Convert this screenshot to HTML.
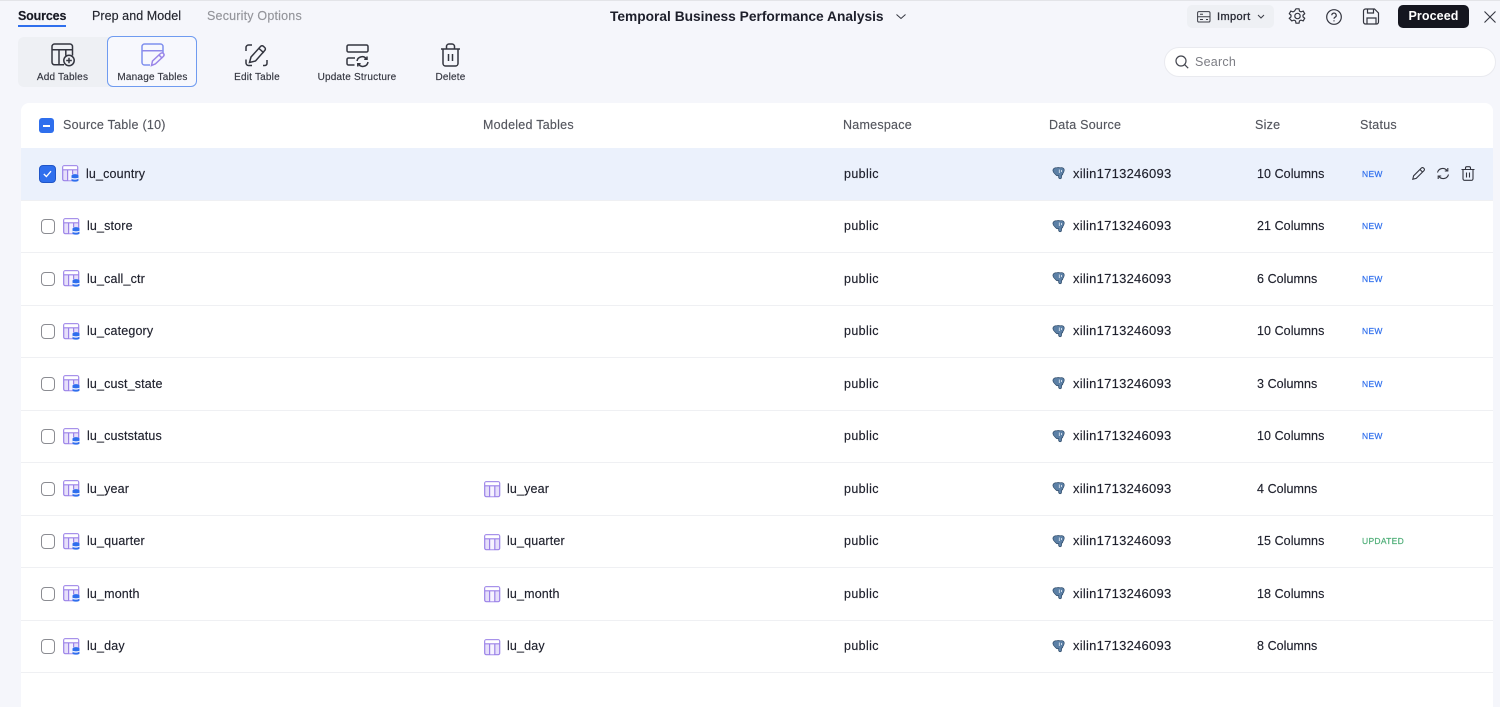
<!DOCTYPE html>
<html lang="en">
<head>
<meta charset="utf-8">
<title>Temporal Business Performance Analysis</title>
<style>
html,body{margin:0;padding:0}
body{width:1500px;height:707px;overflow:hidden;background:#f5f6fb;position:relative;font-family:"Liberation Sans",sans-serif;color:#20222e;-webkit-font-smoothing:antialiased}
.a{position:absolute;white-space:nowrap}
svg{position:absolute;overflow:visible}
.tab{top:8px;font-size:12.5px;line-height:16px;letter-spacing:.06px;-webkit-text-stroke:.15px}
.tool{top:72px;font-size:10px;line-height:12px;color:#33353f;letter-spacing:.2px;text-align:center;-webkit-text-stroke:.15px}
.th{top:117px;font-size:12.5px;line-height:16px;color:#55575f;letter-spacing:.25px;-webkit-text-stroke:.15px}
.row{position:absolute;left:0;width:1473px;height:52.5px;border-bottom:1.5px solid #eff0f3;box-sizing:border-box}
.t{position:absolute;top:17.8px;font-size:12.5px;line-height:16px;letter-spacing:.15px;white-space:nowrap;color:#20222e;-webkit-text-stroke:.15px}
.n1{left:67px}.n2{left:487px}.ns{left:824px;letter-spacing:.38px}.ds{left:1053px;font-size:13px;letter-spacing:.25px}.sz{left:1237px;letter-spacing:.07px}
.st{position:absolute;left:1342px;top:19.500px;font-size:8.5px;line-height:12px;letter-spacing:.3px;color:#2f6fed;-webkit-text-stroke:.2px}
.up{color:#4fae78}
.cb{position:absolute;left:21px;top:18.5px;width:14px;height:14.500px;box-sizing:border-box;border:1.4px solid #8b8c92;border-radius:4px;background:#fff}
.i1{left:43px;top:17px}.i2{left:464px;top:18px}.i3{left:1032px;top:19px}
</style>
</head>
<body>
<div class="a" style="left:0;top:0;width:1500px;height:1px;background:#e3e4e8"></div>

<svg width="0" height="0" style="left:0;top:0">
<defs>
<g id="src">
<rect x=".7" y=".7" width="15" height="15" rx="1.6" fill="#e6dffa" stroke="#9b82e8" stroke-width="1.2"/>
<rect x="1.300" y="1.300" width="13.800" height="3.400" fill="#fff"/>
<rect x="5.900" y="5.300" width="4.400" height="10" fill="#f6f3ff"/>
<path d="M.7 4.800h15M5.600 4.800v10.900M10.600 4.800v4.500" stroke="#9b82e8" stroke-width="1.2" fill="none"/>
<ellipse cx="13" cy="10.800" rx="3.500" ry="1.700" fill="#2f6fed"/>
<path d="M9.500 14.100c1 1 6 1 7 0v1.500c-1 1.400-6 1.400-7 0z" fill="#2f6fed"/>
<rect x="9.500" y="10.800" width="7" height="3.500" fill="#2f6fed"/>
<path d="M9.500 13.100c1 .9 6 .9 7 0" stroke="#fff" stroke-width=".9" fill="none"/>
</g>
<g id="mod">
<rect x=".7" y=".7" width="15" height="15" rx="1.6" fill="#e6dffa" stroke="#9b82e8" stroke-width="1.2"/>
<rect x="1.300" y="1.300" width="13.800" height="3.400" fill="#fff"/>
<rect x="5.800" y="5" width="4.800" height="10.300" fill="#f6f3ff"/>
<path d="M.7 4.800h15M5.600 4.800v10.900M10.800 4.800v10.900" stroke="#9b82e8" stroke-width="1.2" fill="none"/>
</g>
<g id="pg">
<path d="M1 4C.6 1.800 2.500.5 4.500.8c1-.3 2.500-.4 3.500 0 1.500-.5 4-.2 4.200 2 .1 1.700-.8 3-1.500 4 .2.900-.3 1.300-1 1.200l-.2 2.500c-.1 1.500-2.300 1.700-2.800.3l-.2-2.200c-1 .3-2 .3-2.700-.8C3.300 7 1.300 6 1 4z" fill="#5c80a6" stroke="#2e4a68" stroke-width=".7"/>
<path d="M7.300 2.500v3.500M9.500 3v2" stroke="#e8eef6" stroke-width=".8" fill="none"/>
</g>
</defs>
</svg>

<!-- tabs -->
<div class="a tab" style="left:18px;color:#171923;font-weight:bold;font-size:12.5px;letter-spacing:-.15px">Sources</div>
<div class="a" style="left:18px;top:25px;width:48px;height:2px;background:#2f6fed"></div>
<div class="a tab" style="left:92px;color:#24262f">Prep and Model</div>
<div class="a tab" style="left:207px;color:#94959b;letter-spacing:.2px">Security Options</div>

<div class="a" style="left:610px;top:8px;font-size:13.75px;line-height:18px;font-weight:bold;color:#1d1f2b">Temporal Business Performance Analysis</div>
<svg style="left:896px;top:14px" width="10" height="6" fill="none" stroke="#33353f" stroke-width="1"><path d="M.5.5l4.500 4 4.500-4"/></svg>

<!-- toolbar -->
<div class="a" style="left:18px;top:37px;width:100px;height:50px;background:#eef0f4;border-radius:6px"></div>
<div class="a" style="left:107px;top:36px;width:90px;height:51px;box-sizing:border-box;background:#f7f8fd;border:1.2px solid #6f9bf0;border-radius:6px"></div>

<svg style="left:51px;top:43px" width="25" height="25" fill="none" stroke="#33353f" stroke-width="1.500">
<path d="M13 21.800H3.500A2.500 2.500 0 0 1 1 19.300V3.500A2.500 2.500 0 0 1 3.500 1h15.500a2.500 2.500 0 0 1 2.500 2.500v9M1 6.800h20.500M8 6.800v15M14.800 6.800v6"/>
<circle cx="18" cy="17.500" r="5.200"/><path d="M18 14.700v5.600M15.200 17.500h5.600"/>
</svg>
<svg style="left:141px;top:43px" width="25" height="25" fill="none" stroke="#9a85e8" stroke-width="1.500">
<path d="M9 22H3.500A2.500 2.500 0 0 1 1 19.500V3.500A2.500 2.500 0 0 1 3.500 1h16A2.500 2.500 0 0 1 22 3.500v7" stroke="#7f8fee"/>
<path d="M1 7.800h21" stroke="#8f8aea"/>
<path d="M10.500 22.500l1-4.500 8-7.500c1-.9 2.200-.9 3 0 .8.900.7 2-.1 2.900l-8 7.500z"/><path d="M18 12l3.300 3.300"/>
</svg>
<svg style="left:245px;top:44px" width="24" height="23" fill="none" stroke="#33353f" stroke-width="1.500">
<path d="M1 7V3.500A2.500 2.500 0 0 1 3.500 1H7M1 15.500V19a2.500 2.500 0 0 0 2.500 2.500H7M18 21.500h2a2.500 2.500 0 0 0 2-2.500v-3"/>
<path d="M4.500 18.500l1.500-5.500 9.500-10.500c.8-.9 2-1 2.900-.2l1.300 1.200c.9.800.9 2 .1 2.900L10.500 17z"/><path d="M14 4.500l4.800 4.300"/>
</svg>
<svg style="left:346px;top:44px" width="24" height="23" fill="none" stroke="#33353f" stroke-width="1.500">
<rect x="1" y="1" width="21" height="7" rx="1.500"/>
<path d="M8.500 21H2.500A1.500 1.500 0 0 1 1 19.500v-4A1.500 1.500 0 0 1 2.500 14H9"/>
<path d="M11 17a5.200 5.200 0 0 1 9.300-2.200M22 18a5.200 5.200 0 0 1-9.400 2.200"/><path d="M21 12.500v2.800h-2.800M11.800 22.500v-2.800h2.800"/>
</svg>
<svg style="left:440px;top:43px" width="21" height="24" fill="none" stroke="#33353f" stroke-width="1.500">
<path d="M1 6h19M6.500 5.800V3.500A2.500 2.500 0 0 1 9 1h3a2.500 2.500 0 0 1 2.500 2.500v2.300"/>
<path d="M3 6v14.500A2.500 2.500 0 0 0 5.500 23h10a2.500 2.500 0 0 0 2.500-2.500V6M8.500 11v7M12.500 11v7"/>
</svg>

<div class="a tool" style="left:18px;width:89px">Add Tables</div>
<div class="a tool" style="left:107.500px;width:90px">Manage Tables</div>
<div class="a tool" style="left:212px;width:90px">Edit Table</div>
<div class="a tool" style="left:307px;width:100px">Update Structure</div>
<div class="a tool" style="left:420.500px;width:60px">Delete</div>

<!-- right actions -->
<div class="a" style="left:1187px;top:5px;width:87px;height:23px;background:#eef0f4;border-radius:5px"></div>
<svg style="left:1197px;top:11px" width="14" height="12" fill="none" stroke="#3a3c45" stroke-width="1"><rect x=".6" y=".6" width="12.400" height="10.400" rx="1.300"/><path d="M.6 5.800h12.400M3 3.200h3M3 8.500h3M9 8.500h2"/></svg>
<div class="a" style="left:1217px;top:9.500px;font-size:11px;line-height:15px;color:#2c2e38;letter-spacing:.4px;-webkit-text-stroke:.35px">Import</div>
<svg style="left:1257px;top:14px" width="8" height="6" fill="none" stroke="#3a3c45" stroke-width="1"><path d="M1 1l3 3 3-3"/></svg>

<svg style="left:1289px;top:8px" width="17" height="17" fill="none" stroke="#33353f" stroke-width="1.200">
<path d="M7 .8h3l.5 2.300 1.500.8 2.200-.8 1.500 2.600-1.700 1.500v1.600l1.700 1.500-1.500 2.600-2.200-.8-1.500.8-.5 2.300H7l-.5-2.300-1.500-.8-2.200.8L.3 10.300 2 8.800V7.200L.3 5.700l1.500-2.600 2.200.8 1.500-.8z"/>
<circle cx="8.500" cy="8" r="2.700"/>
</svg>
<svg style="left:1326px;top:9px" width="16" height="16" fill="none" stroke="#33353f" stroke-width="1.200">
<circle cx="8" cy="8" r="7.300"/><path d="M5.800 6.300a2.200 2.200 0 1 1 3.300 1.900c-.7.400-1.100.8-1.100 1.600"/><path d="M8 11.300v1.100"/>
</svg>
<svg style="left:1363px;top:8px" width="17" height="17" fill="none" stroke="#33353f" stroke-width="1.200">
<path d="M2.500 1h9l4 4v9a2 2 0 0 1-2 2h-11a2 2 0 0 1-2-2V3a2 2 0 0 1 2-2z"/><path d="M4.500 1v4h6V1M4 16v-6h9v6"/>
</svg>
<div class="a" style="left:1398px;top:5px;width:71px;height:23px;background:#15161f;border-radius:5px;color:#fff;font-size:12.500px;line-height:23px;text-align:center;font-weight:bold;letter-spacing:.1px">Proceed</div>
<svg style="left:1484px;top:11px" width="12" height="12" fill="none" stroke="#33353f" stroke-width="1.100"><path d="M.5.500l11 11M11.500.500l-11 11"/></svg>

<!-- search -->
<div class="a" style="left:1164px;top:47px;width:332px;height:30px;box-sizing:border-box;background:#fff;border:1px solid #e9eaef;border-radius:15px"></div>
<svg style="left:1175px;top:55px" width="14" height="14" fill="none" stroke="#44464f" stroke-width="1.200"><circle cx="6" cy="6" r="5"/><path d="M9.700 9.700l3.500 3.500"/></svg>
<div class="a" style="left:1195px;top:54px;font-size:12.500px;line-height:16px;color:#7c7d84;letter-spacing:.25px">Search</div>

<!-- table -->
<div class="a" style="left:21px;top:103px;width:1472px;height:604px;background:#fff;border-radius:8px 8px 0 0"></div>
<div class="a" style="left:39px;top:118px;width:15px;height:15px;background:#2f6fed;border-radius:3px"></div>
<div class="a" style="left:43px;top:124.500px;width:7px;height:2px;background:#fff"></div>
<div class="a th" style="left:63px">Source Table (10)</div>
<div class="a th" style="left:483px">Modeled Tables</div>
<div class="a th" style="left:843px">Namespace</div>
<div class="a th" style="left:1049px">Data Source</div>
<div class="a th" style="left:1255px">Size</div>
<div class="a th" style="left:1360px">Status</div>

<div class="a" style="left:20px;top:148px;width:1473px;height:525px">
<div class="a" style="left:0;top:0;width:1473px;height:1px;background:#eff0f3"></div>

<div class="row" style="top:0;background:#ebf1fc">
<div class="a" style="left:19px;top:17px;width:17px;height:17.500px;box-sizing:border-box;background:#2f6fed;border:1px solid #1f55c8;border-radius:4px"></div>
<svg style="left:23px;top:21.500px" width="9" height="8" fill="none" stroke="#fff" stroke-width="1.300"><path d="M.8 4l2.600 2.500L8 1.200"/></svg>
<svg class="i1" style="left:42px" width="17" height="17"><use href="#src"/></svg>
<div class="t n1" style="left:66px">lu_country</div><div class="t ns">public</div>
<svg class="i3" width="13" height="13"><use href="#pg"/></svg><div class="t ds">xilin1713246093</div><div class="t sz">10 Columns</div>
<div class="st">NEW</div>
<svg style="left:1392px;top:19px" width="13" height="13" fill="none" stroke="#33353f" stroke-width="1.100"><path d="M.8 12.200l.8-3.400L9.400 1c.7-.6 1.500-.6 2.100 0l.5.500c.6.600.6 1.500 0 2.100L4.200 11.400z"/><path d="M8 2.500l2.600 2.600"/></svg>
<svg style="left:1416px;top:19px" width="14" height="13" fill="none" stroke="#33353f" stroke-width="1.100"><path d="M1.500 5.500A5.400 5.400 0 0 1 11 3.500M12.500 7.500A5.400 5.400 0 0 1 3 9.500"/><path d="M11.800 1v3h-3M2.200 12V9h3"/></svg>
<svg style="left:1441px;top:18px" width="14" height="15" fill="none" stroke="#33353f" stroke-width="1.100"><path d="M.5 3.500h13M4.500 3.300V2A1.300 1.300 0 0 1 5.800.7h2.400A1.300 1.300 0 0 1 9.500 2v1.300"/><path d="M2 3.500v9.300A1.500 1.500 0 0 0 3.500 14.300h7a1.500 1.500 0 0 0 1.500-1.500V3.500M5.500 6.500v5M8.500 6.500v5"/></svg>
</div>

<div class="row" style="top:52.500px"><div class="cb"></div><svg class="i1" width="17" height="17"><use href="#src"/></svg><div class="t n1">lu_store</div><div class="t ns">public</div><svg class="i3" width="13" height="13"><use href="#pg"/></svg><div class="t ds">xilin1713246093</div><div class="t sz">21 Columns</div><div class="st">NEW</div></div>

<div class="row" style="top:105px"><div class="cb"></div><svg class="i1" width="17" height="17"><use href="#src"/></svg><div class="t n1">lu_call_ctr</div><div class="t ns">public</div><svg class="i3" width="13" height="13"><use href="#pg"/></svg><div class="t ds">xilin1713246093</div><div class="t sz">6 Columns</div><div class="st">NEW</div></div>

<div class="row" style="top:157.500px"><div class="cb"></div><svg class="i1" width="17" height="17"><use href="#src"/></svg><div class="t n1">lu_category</div><div class="t ns">public</div><svg class="i3" width="13" height="13"><use href="#pg"/></svg><div class="t ds">xilin1713246093</div><div class="t sz">10 Columns</div><div class="st">NEW</div></div>

<div class="row" style="top:210px"><div class="cb"></div><svg class="i1" width="17" height="17"><use href="#src"/></svg><div class="t n1">lu_cust_state</div><div class="t ns">public</div><svg class="i3" width="13" height="13"><use href="#pg"/></svg><div class="t ds">xilin1713246093</div><div class="t sz">3 Columns</div><div class="st">NEW</div></div>

<div class="row" style="top:262.500px"><div class="cb"></div><svg class="i1" width="17" height="17"><use href="#src"/></svg><div class="t n1">lu_custstatus</div><div class="t ns">public</div><svg class="i3" width="13" height="13"><use href="#pg"/></svg><div class="t ds">xilin1713246093</div><div class="t sz">10 Columns</div><div class="st">NEW</div></div>

<div class="row" style="top:315px"><div class="cb"></div><svg class="i1" width="17" height="17"><use href="#src"/></svg><div class="t n1">lu_year</div><svg class="i2" width="17" height="17"><use href="#mod"/></svg><div class="t n2">lu_year</div><div class="t ns">public</div><svg class="i3" width="13" height="13"><use href="#pg"/></svg><div class="t ds">xilin1713246093</div><div class="t sz">4 Columns</div></div>

<div class="row" style="top:367.500px"><div class="cb"></div><svg class="i1" width="17" height="17"><use href="#src"/></svg><div class="t n1">lu_quarter</div><svg class="i2" width="17" height="17"><use href="#mod"/></svg><div class="t n2">lu_quarter</div><div class="t ns">public</div><svg class="i3" width="13" height="13"><use href="#pg"/></svg><div class="t ds">xilin1713246093</div><div class="t sz">15 Columns</div><div class="st up">UPDATED</div></div>

<div class="row" style="top:420px"><div class="cb"></div><svg class="i1" width="17" height="17"><use href="#src"/></svg><div class="t n1">lu_month</div><svg class="i2" width="17" height="17"><use href="#mod"/></svg><div class="t n2">lu_month</div><div class="t ns">public</div><svg class="i3" width="13" height="13"><use href="#pg"/></svg><div class="t ds">xilin1713246093</div><div class="t sz">18 Columns</div></div>

<div class="row" style="top:472.500px"><div class="cb"></div><svg class="i1" width="17" height="17"><use href="#src"/></svg><div class="t n1">lu_day</div><svg class="i2" width="17" height="17"><use href="#mod"/></svg><div class="t n2">lu_day</div><div class="t ns">public</div><svg class="i3" width="13" height="13"><use href="#pg"/></svg><div class="t ds">xilin1713246093</div><div class="t sz">8 Columns</div></div>
</div>
<div class="a" style="left:20px;top:148px;width:1px;height:525px;background:#f5f6fb"></div>
</body>
</html>
